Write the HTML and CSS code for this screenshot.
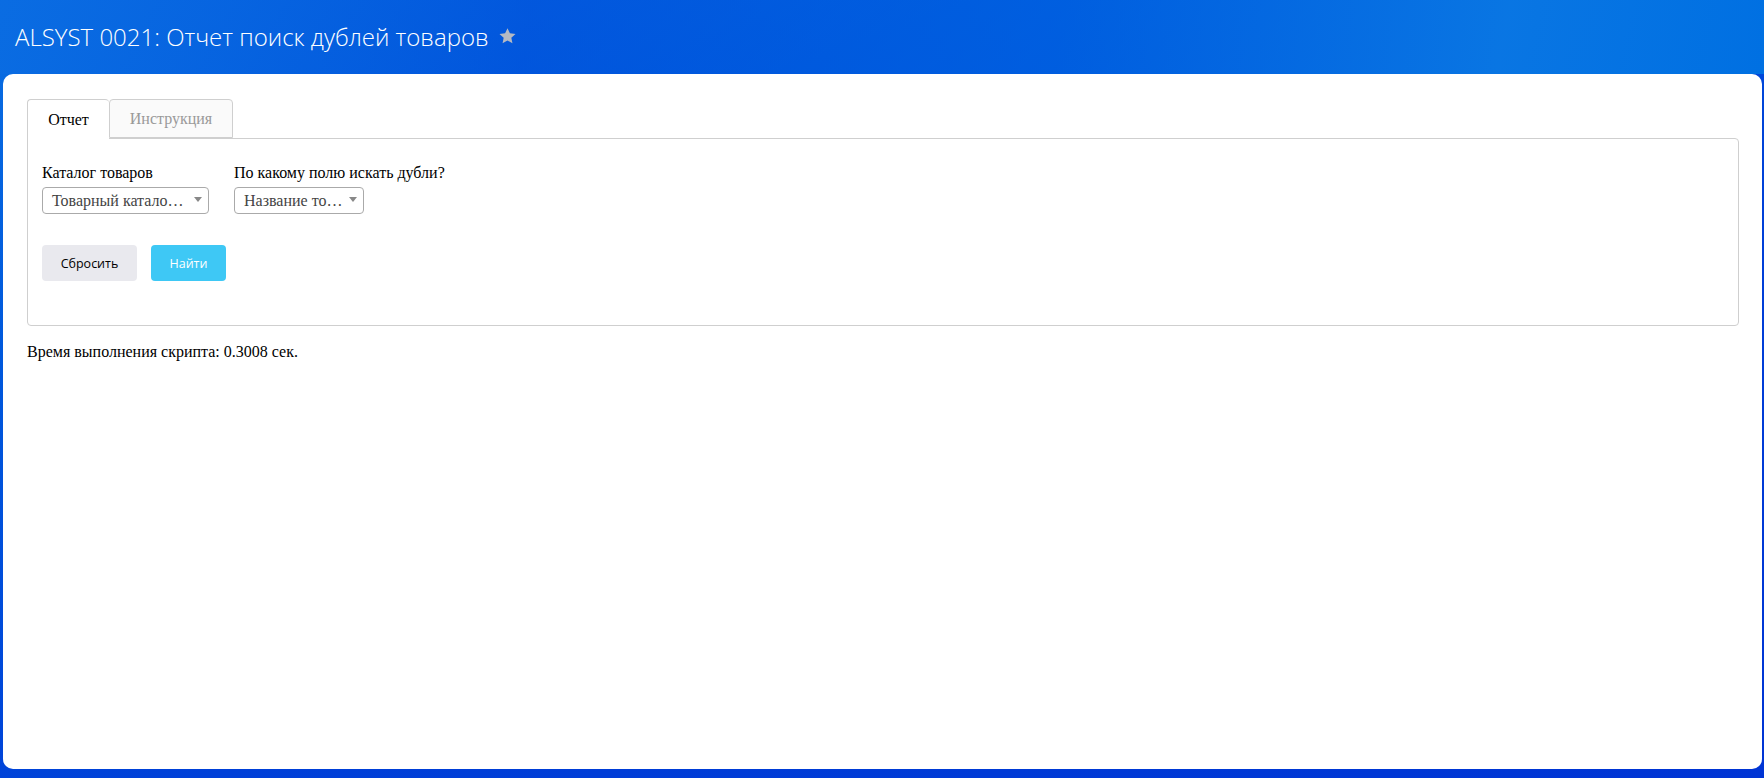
FILE: index.html
```html
<!DOCTYPE html>
<html lang="ru">
<head>
<meta charset="utf-8">
<title>ALSYST 0021</title>
<link rel="stylesheet" href="styles.css">
</head>
<body>
<header class="topbar">
  <h1 class="title">ALSYST 0021: Отчет поиск дублей товаров</h1>
  <svg class="star" viewBox="0 0 24 24" width="19" height="18"><path d="M12 1.5l3.2 6.9 7.5.9-5.6 5.1 1.5 7.4L12 18.1l-6.6 3.7 1.5-7.4-5.6-5.1 7.5-.9z" fill="#b4b9c3"/></svg>
</header>
<main class="card">
  <div class="tabs">
    <div class="tab active">Отчет</div>
    <div class="tab">Инструкция</div>
  </div>
  <section class="panel">
    <div class="fields">
      <div class="field">
        <label class="label">Каталог товаров</label>
        <div class="select sel-1"><span class="sel-text">Товарный катало…</span><span class="arrow"></span></div>
      </div>
      <div class="field">
        <label class="label">По какому полю искать дубли?</label>
        <div class="select sel-2"><span class="sel-text">Название то…</span><span class="arrow"></span></div>
      </div>
    </div>
    <div class="buttons">
      <button class="btn btn-reset">Сбросить</button>
      <button class="btn btn-find">Найти</button>
    </div>
  </section>
  <p class="timing">Время выполнения скрипта: 0.3008 сек.</p>
</main>
</body>
</html>
```
FILE: styles.css
```css
html, body {
  margin: 0;
  padding: 0;
  height: 100%;
}
body {
  background: linear-gradient(160deg, #0a6fe2 0%, #0058dc 25%, #0040d8 60%, #0034d4 100%);
  font-family: "Liberation Serif", "Times New Roman", serif;
  color: #000;
  display: flex;
  flex-direction: column;
  overflow: hidden;
}
.topbar {
  height: 74px;
  display: flex;
  align-items: center;
  padding-left: 15px;
  box-sizing: border-box;
  padding-bottom: 2px;
  background: linear-gradient(100deg, rgba(10,108,226,0.9) 0%, rgba(0,80,220,0.6) 30%, rgba(0,100,226,0.6) 60%, rgba(10,122,228,0.9) 85%, rgba(0,112,226,1) 100%);
}
.title {
  margin: 0;
  font-family: "Open Sans", "Noto Sans", sans-serif;
  font-weight: 300;
  font-size: 24px;
  color: #fff;
}
.star {
  margin-left: 9px;
  margin-top: -1px;
}
.card {
  flex: 1;
  background: #fff;
  margin: 0 2px 9px 3px;
  border-radius: 10px;
  padding: 25px 23px 0 24px;
}
.tabs {
  display: flex;
  align-items: flex-start;
  height: 39px;
  position: relative;
  z-index: 1;
}
.tab {
  box-sizing: border-box;
  border: 1px solid #cfcfcf;
  border-radius: 4px 4px 0 0;
  font-size: 16px;
  display: flex;
  align-items: center;
  justify-content: center;
  padding-top: 1px;
}
.tab.active {
  width: 82px;
  height: 40px;
  background: #fff;
  color: #000;
  border-right: none;
  border-bottom: none;
  padding-bottom: 1px;
}
.tab:not(.active) {
  width: 124px;
  height: 39px;
  background: #fafafa;
  color: #999;
}
.panel {
  border: 1px solid #cfcfcf;
  border-radius: 0 4px 4px 4px;
  height: 188px;
  box-sizing: border-box;
  padding: 25px 14px 0 14px;
}
.fields {
  display: flex;
  gap: 25px;
}
.field {
  display: flex;
  flex-direction: column;
}
.label {
  font-size: 16px;
  line-height: 18px;
  margin-bottom: 5px;
}
.select {
  box-sizing: border-box;
  height: 27px;
  border: 1px solid #aaa;
  border-radius: 4px;
  display: flex;
  align-items: center;
  justify-content: space-between;
  padding: 0 6px 0 9px;
  font-size: 16px;
  color: #444;
}
.sel-1 { width: 167px; }
.sel-2 { width: 130px; }
.sel-text {
  white-space: nowrap;
}
.arrow {
  width: 0;
  height: 0;
  border-left: 4px solid transparent;
  border-right: 4px solid transparent;
  border-top: 5px solid #888;
  margin-top: -3px;
}
.buttons {
  display: flex;
  gap: 14px;
  margin-top: 31px;
}
.btn {
  height: 36px;
  border: none;
  border-radius: 4px;
  font-family: "Open Sans", "Noto Sans", sans-serif;
  font-size: 12.5px;
  padding: 0;
}
.btn-reset {
  width: 95px;
  background: #e9e9ee;
  color: #000;
}
.btn-find {
  width: 75px;
  background: #3ec8f5;
  color: #fff;
}
.timing {
  margin: 17px 0 0 0;
  font-size: 16px;
}
```
